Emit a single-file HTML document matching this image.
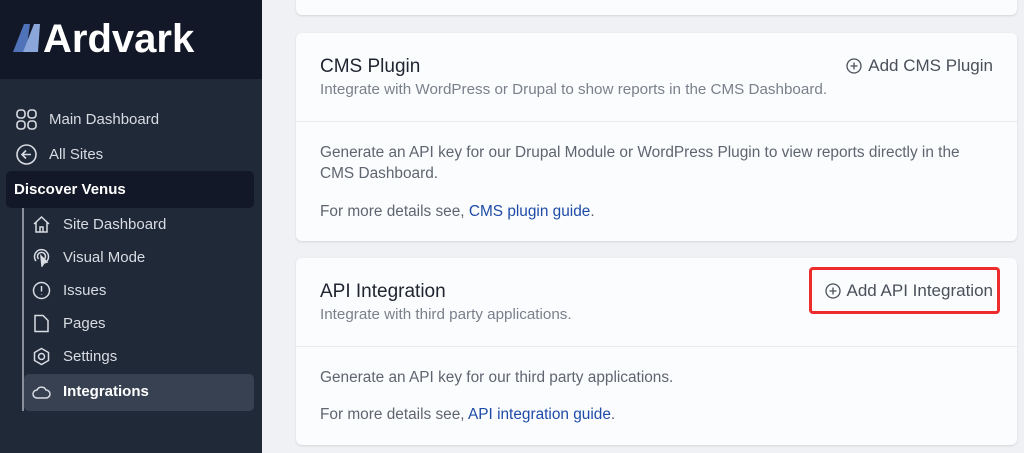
<!DOCTYPE html>
<html><head><style>
*{margin:0;padding:0;box-sizing:border-box}
body{width:1024px;height:453px;overflow:hidden;background:#eff1f5;font-family:"Liberation Sans",sans-serif;position:relative}
.sb{position:absolute;left:0;top:0;width:262px;height:453px;background:#202938}
.hd{position:absolute;left:0;top:0;width:262px;height:79px;background:#121827}
.logo{position:absolute;left:43px;top:17px;color:#fff;font-weight:bold;font-size:40px;letter-spacing:0px}
.it{position:absolute;color:#d8dce3;font-size:15px;display:flex;align-items:center}
.it svg{margin-right:12px}
.card{position:absolute;left:296px;width:721px;background:#fbfcfd;border-radius:6px;box-shadow:0 1px 2px rgba(0,0,0,.12)}
.t{position:absolute;left:24px;font-size:19px;color:#1f2430}
.s{position:absolute;left:24px;font-size:15.2px;color:#7a808b}
.p{position:absolute;left:24px;font-size:15.4px;color:#5f6570;line-height:21px}
.p a{color:#1e4ba8;text-decoration:none}
.div{position:absolute;left:0;right:0;height:1px;background:#e8eaee}
.btn{position:absolute;font-size:17px;color:#4a505a;display:flex;align-items:center}
.btn svg{margin-right:6px}
</style></head><body>
<div class="sb"></div>
<div class="hd"></div>
<svg style="position:absolute;left:13px;top:22px" width="34" height="32" viewBox="0 0 34 32"><path d="M0 30 L11 2 L17 2 L13 30 Z M3 20 H14" fill="#4f72b8"/><path d="M10 30 L21 2 L27 2 L25 30 Z" fill="#8aa6da"/></svg>
<div class="logo">Ardvark</div>
<div class="it" style="left:16px;top:109px"><svg width="21" height="21" viewBox="0 0 21 21" fill="none" stroke="#d8dce3" stroke-width="1.6"><rect x="1" y="1" width="8" height="8" rx="3"/><rect x="12" y="1" width="8" height="8" rx="3"/><rect x="1" y="12" width="8" height="8" rx="3"/><rect x="12" y="12" width="8" height="8" rx="3"/></svg>Main Dashboard</div>
<div class="it" style="left:16px;top:144px"><svg width="21" height="21" viewBox="0 0 21 21" fill="none" stroke="#d8dce3" stroke-width="1.6"><circle cx="10.5" cy="10.5" r="9.5"/><path d="M15 10.5H6M10 6.5l-4 4 4 4"/></svg>All Sites</div>
<div style="position:absolute;left:6px;top:171px;width:248px;height:37px;background:#121827;border-radius:5px"></div>
<div style="position:absolute;left:14px;top:181px;color:#fff;font-weight:bold;font-size:15px">Discover Venus</div>
<div style="position:absolute;left:22px;top:208px;width:1.5px;height:203px;background:#8a909b"></div>
<div style="position:absolute;left:24px;top:374px;width:230px;height:37px;background:#374151;border-radius:5px"></div>
<div class="it" style="left:32px;top:215px"><svg width="19" height="19" viewBox="0 0 19 19" fill="none" stroke="#d8dce3" stroke-width="1.5"><path d="M2 9 L9.5 2 L17 9 M4 7.5V17H15V7.5 M8 17v-5h3v5"/></svg>Site Dashboard</div>
<div class="it" style="left:32px;top:248px"><svg width="19" height="19" viewBox="0 0 19 19" fill="none" stroke="#d8dce3" stroke-width="1.5"><path d="M4 13A7 7 0 1 1 15 13M6.5 11A4 4 0 1 1 12.5 11"/><path d="M9 8l1 10 2-3 3-1z" fill="#d8dce3"/></svg>Visual Mode</div>
<div class="it" style="left:32px;top:281px"><svg width="19" height="19" viewBox="0 0 19 19" fill="none" stroke="#d8dce3" stroke-width="1.5"><circle cx="9.5" cy="9.5" r="8"/><path d="M9.5 5v5.5M9.5 13v.5"/></svg>Issues</div>
<div class="it" style="left:32px;top:314px"><svg width="19" height="19" viewBox="0 0 19 19" fill="none" stroke="#d8dce3" stroke-width="1.5"><path d="M3 1.5H11L16 6.5V17.5H3Z"/></svg>Pages</div>
<div class="it" style="left:32px;top:347px"><svg width="19" height="19" viewBox="0 0 19 19" fill="none" stroke="#d8dce3" stroke-width="1.5"><path d="M9.5 1.5L16.5 5.5V13.5L9.5 17.5L2.5 13.5V5.5Z"/><circle cx="9.5" cy="9.5" r="3"/></svg>Settings</div>
<div class="it" style="left:32px;top:382px;color:#fff;font-weight:bold"><svg width="19" height="19" viewBox="0 0 19 19" fill="none" stroke="#d8dce3" stroke-width="1.5"><path d="M5 16H14A4 4 0 0 0 14 8 A5 5 0 0 0 5 8A4 4 0 0 0 5 16Z"/></svg>Integrations</div>

<div class="card" style="top:-10px;height:25px"></div>
<div class="card" style="top:33px;height:208px">
<div class="t" style="top:23px">CMS Plugin</div>
<div class="s" style="top:48px">Integrate with WordPress or Drupal to show reports in the CMS Dashboard.</div>
<div class="btn" style="right:24px;top:23px"><svg width="16" height="16" viewBox="0 0 16 16" fill="none" stroke="#4a505a" stroke-width="1.3"><circle cx="8" cy="8" r="7"/><path d="M8 4.5v7M4.5 8h7"/></svg>Add CMS Plugin</div>
<div class="div" style="top:88px"></div>
<div class="p" style="top:109px">Generate an API key for our Drupal Module or WordPress Plugin to view reports directly in the<br>CMS Dashboard.</div>
<div class="p" style="top:168px">For more details see, <a>CMS plugin guide</a>.</div>
</div>
<div class="card" style="top:258px;height:187px">
<div class="t" style="top:23px">API Integration</div>
<div class="s" style="top:48px">Integrate with third party applications.</div>
<div class="btn" style="right:24px;top:23px"><svg width="16" height="16" viewBox="0 0 16 16" fill="none" stroke="#4a505a" stroke-width="1.3"><circle cx="8" cy="8" r="7"/><path d="M8 4.5v7M4.5 8h7"/></svg>Add API Integration</div>
<div class="div" style="top:88px"></div>
<div class="p" style="top:109px">Generate an API key for our third party applications.</div>
<div class="p" style="top:146px">For more details see, <a>API integration guide</a>.</div>
</div>
<div style="position:absolute;left:809px;top:267px;width:191px;height:47px;border:3px solid #ee2c2c;border-radius:4px"></div>
</body></html>
